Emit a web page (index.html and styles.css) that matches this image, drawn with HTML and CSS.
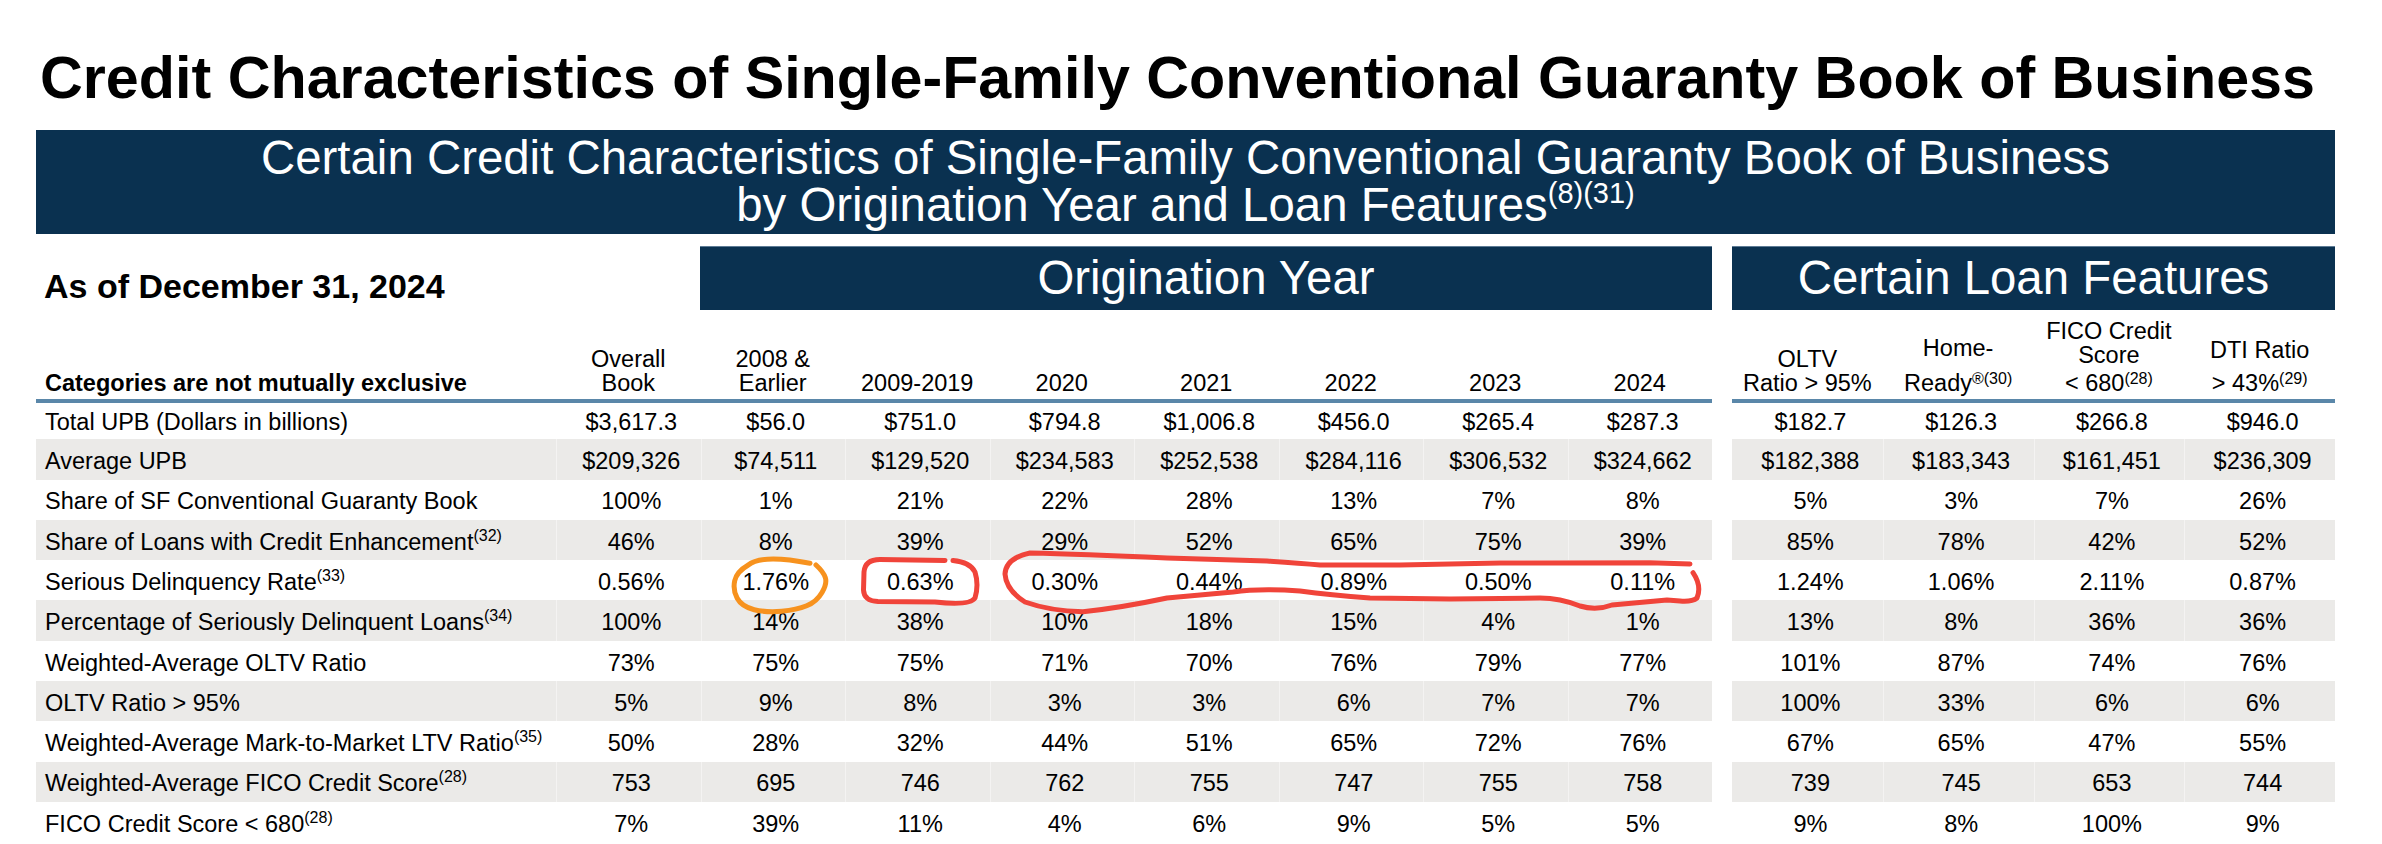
FILE: index.html
```html
<!DOCTYPE html>
<html lang="en">
<head>
<meta charset="utf-8">
<title>Credit Characteristics</title>
<link rel="stylesheet" href="styles.css">
</head>
<body>
<div class="page">
  <h1 class="title">Credit Characteristics of Single-Family Conventional Guaranty Book of Business</h1>
  <div class="banner">
    <div class="bline">Certain Credit Characteristics of Single-Family Conventional Guaranty Book of Business</div>
    <div class="bline">by Origination Year and Loan Features<span class="bsup">(8)(31)</span></div>
  </div>

  <div class="tables">
    <div class="tbl left">
      <div class="row top">
        <div class="asof">As of December 31, 2024</div>
        <div class="section">Origination Year</div>
      </div>
      <div class="row head">
        <div class="hd lab"><div>Categories are not mutually exclusive</div></div>
        <div class="hd"><div>Overall</div><div>Book</div></div>
        <div class="hd"><div>2008 &amp;</div><div>Earlier</div></div>
        <div class="hd"><div>2009-2019</div></div>
        <div class="hd"><div>2020</div></div>
        <div class="hd"><div>2021</div></div>
        <div class="hd"><div>2022</div></div>
        <div class="hd"><div>2023</div></div>
        <div class="hd"><div>2024</div></div>
      </div>
      <div class="row r first">
        <div class="c lab">Total UPB (Dollars in billions)</div>
        <div class="c">$3,617.3</div><div class="c">$56.0</div><div class="c">$751.0</div><div class="c">$794.8</div><div class="c">$1,006.8</div><div class="c">$456.0</div><div class="c">$265.4</div><div class="c">$287.3</div>
      </div>
      <div class="row r g">
        <div class="c lab">Average UPB</div>
        <div class="c">$209,326</div><div class="c">$74,511</div><div class="c">$129,520</div><div class="c">$234,583</div><div class="c">$252,538</div><div class="c">$284,116</div><div class="c">$306,532</div><div class="c">$324,662</div>
      </div>
      <div class="row r">
        <div class="c lab">Share of SF Conventional Guaranty Book</div>
        <div class="c">100%</div><div class="c">1%</div><div class="c">21%</div><div class="c">22%</div><div class="c">28%</div><div class="c">13%</div><div class="c">7%</div><div class="c">8%</div>
      </div>
      <div class="row r g">
        <div class="c lab">Share of Loans with Credit Enhancement<span class="s">(32)</span></div>
        <div class="c">46%</div><div class="c">8%</div><div class="c">39%</div><div class="c">29%</div><div class="c">52%</div><div class="c">65%</div><div class="c">75%</div><div class="c">39%</div>
      </div>
      <div class="row r">
        <div class="c lab">Serious Delinquency Rate<span class="s">(33)</span></div>
        <div class="c">0.56%</div><div class="c">1.76%</div><div class="c">0.63%</div><div class="c">0.30%</div><div class="c">0.44%</div><div class="c">0.89%</div><div class="c">0.50%</div><div class="c">0.11%</div>
      </div>
      <div class="row r g">
        <div class="c lab">Percentage of Seriously Delinquent Loans<span class="s">(34)</span></div>
        <div class="c">100%</div><div class="c">14%</div><div class="c">38%</div><div class="c">10%</div><div class="c">18%</div><div class="c">15%</div><div class="c">4%</div><div class="c">1%</div>
      </div>
      <div class="row r">
        <div class="c lab">Weighted-Average OLTV Ratio</div>
        <div class="c">73%</div><div class="c">75%</div><div class="c">75%</div><div class="c">71%</div><div class="c">70%</div><div class="c">76%</div><div class="c">79%</div><div class="c">77%</div>
      </div>
      <div class="row r g">
        <div class="c lab">OLTV Ratio &gt; 95%</div>
        <div class="c">5%</div><div class="c">9%</div><div class="c">8%</div><div class="c">3%</div><div class="c">3%</div><div class="c">6%</div><div class="c">7%</div><div class="c">7%</div>
      </div>
      <div class="row r">
        <div class="c lab">Weighted-Average Mark-to-Market LTV Ratio<span class="s">(35)</span></div>
        <div class="c">50%</div><div class="c">28%</div><div class="c">32%</div><div class="c">44%</div><div class="c">51%</div><div class="c">65%</div><div class="c">72%</div><div class="c">76%</div>
      </div>
      <div class="row r g">
        <div class="c lab">Weighted-Average FICO Credit Score<span class="s">(28)</span></div>
        <div class="c">753</div><div class="c">695</div><div class="c">746</div><div class="c">762</div><div class="c">755</div><div class="c">747</div><div class="c">755</div><div class="c">758</div>
      </div>
      <div class="row r">
        <div class="c lab">FICO Credit Score &lt; 680<span class="s">(28)</span></div>
        <div class="c">7%</div><div class="c">39%</div><div class="c">11%</div><div class="c">4%</div><div class="c">6%</div><div class="c">9%</div><div class="c">5%</div><div class="c">5%</div>
      </div>
    </div>

    <div class="tbl right">
      <div class="row top">
        <div class="section">Certain Loan Features</div>
      </div>
      <div class="row head">
        <div class="hd"><div>OLTV</div><div>Ratio &gt; 95%</div></div>
        <div class="hd"><div>Home-</div><div class="sp11">Ready<span class="hs">®(30)</span></div></div>
        <div class="hd"><div>FICO Credit</div><div>Score</div><div class="sp4">&lt; 680<span class="hs">(28)</span></div></div>
        <div class="hd"><div>DTI Ratio</div><div class="sp9">&gt; 43%<span class="hs">(29)</span></div></div>
      </div>
      <div class="row r first">
        <div class="c">$182.7</div><div class="c">$126.3</div><div class="c">$266.8</div><div class="c">$946.0</div>
      </div>
      <div class="row r g">
        <div class="c">$182,388</div><div class="c">$183,343</div><div class="c">$161,451</div><div class="c">$236,309</div>
      </div>
      <div class="row r">
        <div class="c">5%</div><div class="c">3%</div><div class="c">7%</div><div class="c">26%</div>
      </div>
      <div class="row r g">
        <div class="c">85%</div><div class="c">78%</div><div class="c">42%</div><div class="c">52%</div>
      </div>
      <div class="row r">
        <div class="c">1.24%</div><div class="c">1.06%</div><div class="c">2.11%</div><div class="c">0.87%</div>
      </div>
      <div class="row r g">
        <div class="c">13%</div><div class="c">8%</div><div class="c">36%</div><div class="c">36%</div>
      </div>
      <div class="row r">
        <div class="c">101%</div><div class="c">87%</div><div class="c">74%</div><div class="c">76%</div>
      </div>
      <div class="row r g">
        <div class="c">100%</div><div class="c">33%</div><div class="c">6%</div><div class="c">6%</div>
      </div>
      <div class="row r">
        <div class="c">67%</div><div class="c">65%</div><div class="c">47%</div><div class="c">55%</div>
      </div>
      <div class="row r g">
        <div class="c">739</div><div class="c">745</div><div class="c">653</div><div class="c">744</div>
      </div>
      <div class="row r">
        <div class="c">9%</div><div class="c">8%</div><div class="c">100%</div><div class="c">9%</div>
      </div>
    </div>
  </div>
</div>

<svg class="marks" width="2382" height="844" viewBox="0 0 2382 844" aria-hidden="true">
  <path class="orange" d="M810 563.3 Q762 554 748.3 565 Q736.7 571.7 734.7 580.8 Q732.7 590 737.2 598.3 Q741.7 606.7 754.2 609.7 Q766.7 612.7 781.7 611.3 Q796.7 610 806.7 605.8 Q816.7 601.7 822 592.5 Q827.3 583.3 825.3 577.5 Q823.3 571.7 816 565"/>
  <path class="red" d="M945 560.5 L880 559.5 Q865 559.5 864 572 L863.5 590 Q864 601 878 601.5 L935 602 Q970 606 975 598 Q979 585 975 572 Q970 562 953 560.5"/>
  <path class="red" d="M1693 572.7 Q1702 586 1697 598 Q1692 602 1680 601 L1667 600 L1612 605 Q1596 611 1580 606 Q1560 598 1540 598 L1450 599 L1370 598 Q1330 595 1300 591 Q1260 588 1233 592 L1167 598 Q1120 608 1083 611.7 Q1050 611 1025 602 Q1006 590 1005 574 Q1006 558 1030 553 Q1080 554 1167 558 L1267 561 Q1300 563 1320 565 L1400 565 L1500 563 L1650 562.7 L1690 564"/>
</svg>
</body>
</html>
```

FILE: styles.css
```css
html, body {
  margin: 0;
  padding: 0;
  overflow: hidden;
  background: #ffffff;
}

body {
  position: relative;
  width: 2382px;
  height: 844px;
  font-family: "Liberation Sans", Arial, sans-serif;
  color: #000000;
}

.page {
  margin-left: 36px;
  width: 2299px;
}

.title {
  margin: 42.5px 0 0;
  padding-left: 4px;
  font-size: 59.25px;
  font-weight: 700;
  line-height: 70px;
  white-space: nowrap;
}

.banner {
  margin-top: 17.5px;
  height: 104px;
  box-sizing: border-box;
  padding-top: 4px;
  background: #0a3150;
  color: #ffffff;
  font-size: 47.4px;
  text-align: center;
  white-space: nowrap;
}

.bline {
  height: 47px;
  line-height: 47px;
}

.bsup {
  font-size: 29px;
  line-height: 0;
  vertical-align: 18px;
}

.tables {
  display: flex;
  gap: 20px;
  margin-top: 12px;
}

.tbl {
  display: flex;
  flex-direction: column;
}

.left {
  --cols: 520px repeat(8, 144.5px);
  width: 1676px;
}

.right {
  --cols: repeat(4, 150.75px);
  width: 603px;
}

.row {
  display: grid;
  grid-template-columns: var(--cols);
}

.top {
  height: 64px;
}

.left .top {
  grid-template-columns: 664px 1012px;
}

.right .top {
  grid-template-columns: 603px;
}

.asof {
  display: flex;
  align-items: flex-end;
  padding: 0 0 4px 8px;
  font-size: 34px;
  font-weight: 700;
  line-height: 40px;
  white-space: nowrap;
}

.section {
  height: 64px;
  box-sizing: border-box;
  border-top: 1px solid #5d7b95;
  background: #0a3150;
  color: #ffffff;
  font-size: 47.4px;
  line-height: 62px;
  text-align: center;
  white-space: nowrap;
}

.head {
  height: 93px;
  box-sizing: border-box;
  border-bottom: 4px solid #5a87a9;
}

.hd {
  display: flex;
  flex-direction: column;
  justify-content: flex-end;
  align-items: center;
  padding-bottom: 4px;
  font-size: 23.5px;
  line-height: 24px;
  text-align: center;
  white-space: nowrap;
}

.hd.lab {
  align-items: flex-start;
  padding-left: 9px;
  font-weight: 700;
}

.sp11 { margin-top: 11px; }
.sp9 { margin-top: 9px; }
.sp4 { margin-top: 4px; }

.hs {
  font-size: 16px;
  line-height: 0;
  vertical-align: 7px;
}

.r {
  height: 40.3px;
  box-sizing: border-box;
  font-size: 23.5px;
}

.r .c {
  padding-top: 4.8px;
  padding-left: 6px;
  line-height: 35.5px;
  text-align: center;
  white-space: nowrap;
}

.r .c.lab {
  padding-left: 9px;
  text-align: left;
}

.r.first {
  height: 36.3px;
}

.r.first .c {
  padding-top: 2.3px;
  line-height: 34px;
}

.r.g {
  background: #ebeae8;
}

.r.g .c + .c {
  box-shadow: inset 1px 0 0 #f4f3f2;
}

.s {
  font-size: 16px;
  line-height: 0;
  vertical-align: 9px;
}

.marks {
  position: absolute;
  top: 0;
  left: 0;
  pointer-events: none;
}

.marks path {
  fill: none;
  stroke-width: 5;
  stroke-linecap: round;
  stroke-linejoin: round;
}

.marks .orange {
  stroke: #f7921e;
}

.marks .red {
  stroke: #f0443a;
}
```
